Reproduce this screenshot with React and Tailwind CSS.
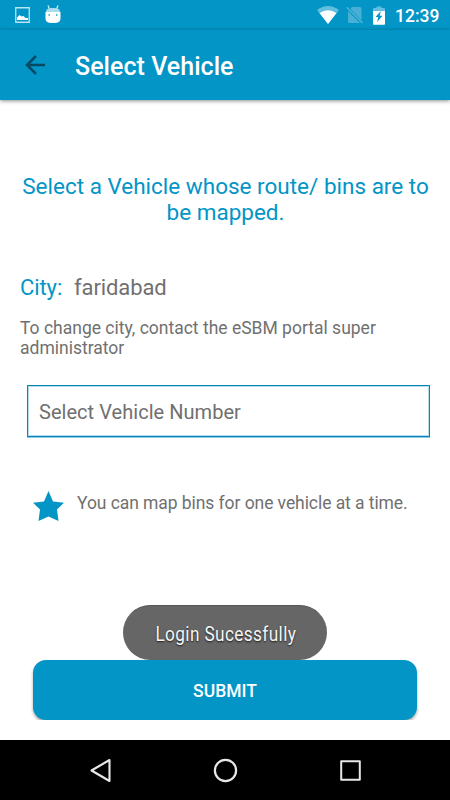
function StatusBar() {
  return (
    <header className="flex h-[30px] shrink-0 items-center bg-[#0295c6] pl-[15px] pr-[11px] text-white">
      <svg className="h-[16px] w-[15px]" viewBox="0 0 15 16" fill="none">
        <path d="M.75.75h13.5v14.5H.75z" stroke="#b5e4f3" strokeWidth="1.3" />
        <path d="M2 13V10.500l2.500-2.500 2 1.500 2-.5 2 2h2.500v2z" fill="#fff" />
      </svg>
      <svg className="ml-[15px] h-[19px] w-[16px] -translate-y-px" viewBox="0 0 16 19" fill="none">
        <path d="M3 .5l1.500 3.500M13 .5l-1.500 3.500" stroke="#d5f1fa" strokeWidth="1.200" />
        <path d="M1 7C1 4.300 3 3 8 3s7 1.300 7 4z" fill="#a9dced" />
        <path d="M.5 7h15v6c0 4-2 5-7.500 5S.5 17 .5 13z" fill="#fff" />
        <path d="M3.500 9h1.500v2H3.500zM11 9h1.500v2H11z" fill="#57b5d5" />
      </svg>
      <div className="ml-auto flex items-center">
        <svg className="h-[18px] w-[22px]" viewBox="0 0 22 18">
          <path d="M0 4Q11-4 22 4L11 18z" fill="#61bedf" />
          <path d="M2.500 7Q11 1.500 19.500 7L11 18z" fill="#fff" />
        </svg>
        <svg className="ml-[7px] h-[18px] w-[18px]" viewBox="0 0 18 18" fill="none">
          <path d="M6 1h8q1.500 0 1.500 1.500v12L4.500 3zM2 5l12 12H3.500Q2 17 2 15.500z" fill="#48b0d6" />
          <path d="M.7 1.300 16.500 17" stroke="#58b5d6" strokeWidth="1.300" />
        </svg>
        <svg className="ml-[9px] h-[19px] w-[12px]" viewBox="0 0 12 19">
          <path d="M0 6V3q0-1 1-1h2.500V.5h5V2H11q1 0 1 1v3z" fill="#61bedf" />
          <path d="M0 5h12v13q0 .7-.7.7H.7Q0 18.700 0 18z" fill="#fff" />
          <path d="M7.800 5 2.500 11h2.800l-1.100 5 5.300-6.200H6.700z" fill="#0295c6" />
        </svg>
        <span className="ml-[10px] w-[44px] whitespace-nowrap pt-[3px] text-[17.5px] font-medium leading-none">12:39</span>
      </div>
    </header>
  );
}

function AppBar() {
  return (
    <div className="relative flex h-[70px] shrink-0 items-center bg-[#0295c6] pl-[25px] shadow-[0_1px_4px_rgba(0,0,0,0.45)]">
      <svg className="h-[20px] w-[20px]" viewBox="0 0 20 20" fill="none" stroke="#034a64" strokeWidth="2.500">
        <path d="M20 10H2M11 1 2 10l9 9" />
      </svg>
      <h1 className="ml-[30px] pt-[2px] text-[25px] font-medium leading-none tracking-[0.04px] text-white">Select Vehicle</h1>
    </div>
  );
}

function NavigationBar() {
  return (
    <nav className="flex h-[60px] shrink-0 items-center bg-black pl-[89px]">
      <svg className="h-[26px] w-[23px]" viewBox="0 0 23 26" fill="none" stroke="#e8e8e8" strokeWidth="2.100" strokeLinejoin="round">
        <path d="M20.500 3v21L2.500 13.500z" />
      </svg>
      <svg className="ml-[101px] h-[26px] w-[26px]" viewBox="0 0 26 26" fill="none" stroke="#e8e8e8" strokeWidth="2.200">
        <circle cx="12.500" cy="13.500" r="10.600" />
      </svg>
      <svg className="ml-[101px] h-[22px] w-[22px]" viewBox="0 0 22 22" fill="none" stroke="#e8e8e8" strokeWidth="2" strokeLinejoin="round">
        <path d="M1.200 2.200h18.600v18.600H1.200z" />
      </svg>
    </nav>
  );
}

export default function App() {
  return (
    <div className="relative flex h-[800px] w-[450px] flex-col overflow-hidden bg-white font-['Roboto',sans-serif] text-[#707070]">
      <StatusBar />
      <AppBar />
      <main className="flex flex-1 flex-col pt-[73px]">
        <p className="pl-px text-center text-[22.5px] leading-[26.4px] text-[#0295c6]">
          Select a Vehicle whose route/ bins are to<br />be mapped.
        </p>
        <div className="mt-[49px] flex pl-[20px] text-[22px] leading-[26px] tracking-[-0.1px]">
          <span className="w-[54px] text-[#0295c6]">City:</span>
          <span>faridabad</span>
        </div>
        <p className="mt-[17px] pl-[20px] text-[17.5px] leading-[20.5px]">
          To change city, contact the eSBM portal super<br />administrator
        </p>
        <div className="ml-[27px] mt-[26px] flex h-[52px] w-[403px] items-center border border-[#0785bb] pl-[11px] pt-[3px] text-[20px] tracking-[0.04px] shadow-[inset_0_0_0_1px_#b3dcec,0_1px_0_#8ccbe2]">
          Select Vehicle Number
        </div>
        <div className="mt-[54px] flex h-[32px] pl-[33px]">
          <svg className="h-[32px] w-[31px]" viewBox="0 0 31 32">
            <path d="M15.500 0 20 10.500l11 1.300-7 6.700 1.500 11.500-10-4.500-10 4.500L7 18.500 0 11.800l11-1.300z" fill="#0295c6" />
          </svg>
          <span className="ml-[13px] whitespace-nowrap text-[17.5px] leading-[25px] tracking-[-0.07px]">You can map bins for one vehicle at a time.</span>
        </div>
        <div className="mb-[20px] mt-auto h-[61px] overflow-hidden px-[33px] pt-px">
          <button className="h-[60px] w-full rounded-[13px] bg-[#0295c6] pt-[2px] text-[17.5px] font-medium text-white shadow-[0_2px_3px_rgba(0,0,0,0.35)]">
            SUBMIT
          </button>
        </div>
      </main>
      <NavigationBar />
      <div className="absolute left-[123px] top-[605px] flex h-[55px] w-[204px] items-center justify-center rounded-full border-t border-[#555] bg-[#666] pl-[2px] pt-[2px] text-[20px] text-[#f5f5f5]">
        <span className="scale-x-[0.86] whitespace-nowrap tracking-[0.45px] [text-shadow:0_1px_2px_rgba(0,0,0,0.75)]">Login Sucessfully</span>
      </div>
    </div>
  );
}
